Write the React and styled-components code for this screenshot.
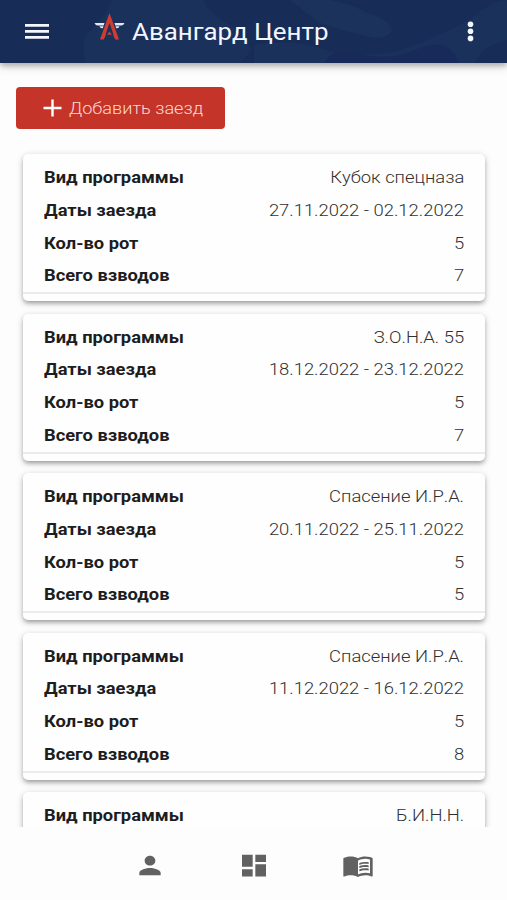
import React from "react";
import styled, { createGlobalStyle } from "styled-components";
import { MdPerson, MdDashboard, MdMenuBook } from "react-icons/md";

const GlobalStyle = createGlobalStyle`
  *, *::before, *::after { box-sizing: border-box; }
  body { margin: 0; background: #fdfdfd; font-family: Roboto, "Noto Sans", sans-serif; }
`;

const Screen = styled.div`
  width: 507px;
  height: 900px;
  display: flex;
  flex-direction: column;
  overflow: hidden;
  background: #fdfdfd;
`;

const Header = styled.header`
  position: relative;
  z-index: 1;
  flex: none;
  height: 63px;
  display: flex;
  align-items: center;
  padding: 0 24px 0 25px;
  background: #172d57;
  box-shadow: 0 3px 5px rgba(0, 0, 0, 0.24), 0 5px 10px rgba(0, 0, 0, 0.1);
`;

const Camouflage = styled.svg`
  position: absolute;
  inset: 0;
  z-index: -1;
`;

const IconButton = styled.button`
  display: flex;
  padding: 0;
  border: 0;
  background: none;
  margin-left: ${(p) => p.$start || "0"};
`;

const Logo = styled.svg`
  margin: -10px 0 0 45px;
`;

const Title = styled.h1`
  margin: 3px 0 0 6px;
  font-size: 23px;
  line-height: 30px;
  font-weight: 400;
  color: #f4f7ff;
  white-space: nowrap;
  transform: scaleX(1.125);
  transform-origin: left;
`;

const Content = styled.main`
  flex: none;
  height: 764px;
  overflow: hidden;
  padding: 24px 22px 0 23px;
`;

const AddButton = styled.button`
  display: flex;
  align-items: center;
  gap: 7px;
  width: 209px;
  height: 42px;
  margin: 0 0 25px -7px;
  padding: 0 0 0 27px;
  border: 0;
  border-radius: 4px;
  background: #c53429;
  color: #ffd9d2;
  font-family: inherit;
`;

const ButtonLabel = styled.span`
  font-size: 16.5px;
  font-weight: 300;
  white-space: nowrap;
  transform: scaleX(1.1);
  transform-origin: left;
`;

const CardList = styled.div`
  display: flex;
  flex-direction: column;
  gap: 12.5px;
`;

const Card = styled.article`
  flex: none;
  height: 147px;
  padding-top: 7px;
  border-radius: 5px;
  background: #fefefe;
  box-shadow: 0 3px 4px -1px rgba(0, 0, 0, 0.26), 0 2px 7px rgba(0, 0, 0, 0.22);
`;

const Rows = styled.dl`
  margin: 0;
  height: 133px;
  padding: 0 21px;
  border-bottom: 2px solid #ececec;
`;

const Row = styled.div`
  display: flex;
  justify-content: space-between;
  height: 32.75px;
  line-height: 33.6px;
  white-space: nowrap;
`;

const Label = styled.dt`
  font-size: 16.5px;
  font-weight: 700;
  color: #1d1d1d;
  transform: scaleX(1.11);
  transform-origin: left;
`;

const Value = styled.dd`
  margin: 0;
  font-size: 16.5px;
  font-weight: 300;
  font-kerning: none;
  color: #303030;
  transform: scaleX(1.115);
  transform-origin: right;
`;

const BottomNav = styled.nav`
  flex: 1;
  display: flex;
  justify-content: center;
  gap: 72px;
  padding-top: 24px;
  color: #616161;
`;

const NavItem = styled.a`
  display: flex;
  width: 32px;
  height: 29px;
  svg { width: 32px; height: 29px; }
`;

const rides = [
  ["Кубок спецназа", "27.11.2022 - 02.12.2022", 5, 7],
  ["З.О.Н.А. 55", "18.12.2022 - 23.12.2022", 5, 7],
  ["Спасение И.Р.А.", "20.11.2022 - 25.11.2022", 5, 5],
  ["Спасение И.Р.А.", "11.12.2022 - 16.12.2022", 5, 8],
  ["Б.И.Н.Н."],
];
const labels = ["Вид программы", "Даты заезда", "Кол-во рот", "Всего взводов"];

export default function App() {
  return (
    <>
      <GlobalStyle />
      <Screen>
        <Header>
          <Camouflage width="507" height="63" aria-hidden="true">
            <path d="M86 63Q80 47 87 34Q105 18 112 0H203Q211 15 225 22T252 50L240 63Z" fill="#1a315b" />
            <path d="M290 0H330Q355 5 365 12Q389 19 392 30Q386 42 367 36Q337 29 320 23Z" fill="#1b325c" />
            <path d="M254 45Q295 38 325 50Q365 59 401 50Q440 37 474 17Q485 4 507 0V40Q480 47 475 63H254Z" fill="#1a315c" />
            <path d="M324 63Q333 47 349 51Q387 64 420 48Q450 37 459 63Z" fill="#182a59" />
          </Camouflage>
          <IconButton aria-label="Меню">
            <svg width="24" height="16" viewBox="0 0 24 16" fill="#f4f7ff">
              <path d="M0 0H24V2.7H0ZM0 6H24V8.7H0ZM0 12H24V14.7H0Z" />
            </svg>
          </IconButton>
          <Logo width="32" height="28" viewBox="0 0 32 28">
            <path d="M.5 10H10.5L9.7 12.5H4Q1.5 12.5 .5 10ZM20.5 10H30.5Q29.5 12.5 27 12.5H21.3ZM5.5 13.2H9.5L8.8 15.2H8Q6 15 5.5 13.2ZM21.5 13.2H25.5Q25 15 23 15.2H22.2Z" fill="#e3e8f5" />
            <path d="M15.5 0L25 26.5H21.2L15.5 10L9.8 26.5H6Z" fill="#ce3d32" />
            <path d="M15.5 18.5L18 21.7H13Z" fill="#ce3d32" />
            <path d="M9.5 23L12 21.3L10.6 25ZM21.5 23L19 21.3L20.4 25Z" fill="#ce3d32" />
          </Logo>
          <Title>Авангард Центр</Title>
          <IconButton $start="auto" aria-label="Ещё">
            <svg width="25" height="22" viewBox="0 0 25 22" fill="#f4f7ff">
              <circle cx="12.5" cy="3.2" r="2.8" />
              <circle cx="12.5" cy="10.3" r="2.8" />
              <circle cx="12.5" cy="17.4" r="2.8" />
            </svg>
          </IconButton>
        </Header>
        <Content>
          <AddButton>
            <svg width="19" height="18" viewBox="0 0 19 18" fill="none" stroke="#fff" strokeWidth="2.4">
              <path d="M9.5 .5V17.5M.5 9H18.5" />
            </svg>
            <ButtonLabel>Добавить заезд</ButtonLabel>
          </AddButton>
          <CardList>
            {rides.map((ride, i) => (
              <Card key={i}>
                <Rows>
                  {ride.map((value, j) => (
                    <Row key={labels[j]}>
                      <Label>{labels[j]}</Label>
                      <Value>{value}</Value>
                    </Row>
                  ))}
                </Rows>
              </Card>
            ))}
          </CardList>
        </Content>
        <BottomNav>
          <NavItem><MdPerson preserveAspectRatio="none" /></NavItem>
          <NavItem><MdDashboard preserveAspectRatio="none" /></NavItem>
          <NavItem><MdMenuBook preserveAspectRatio="none" /></NavItem>
        </BottomNav>
      </Screen>
    </>
  );
}
